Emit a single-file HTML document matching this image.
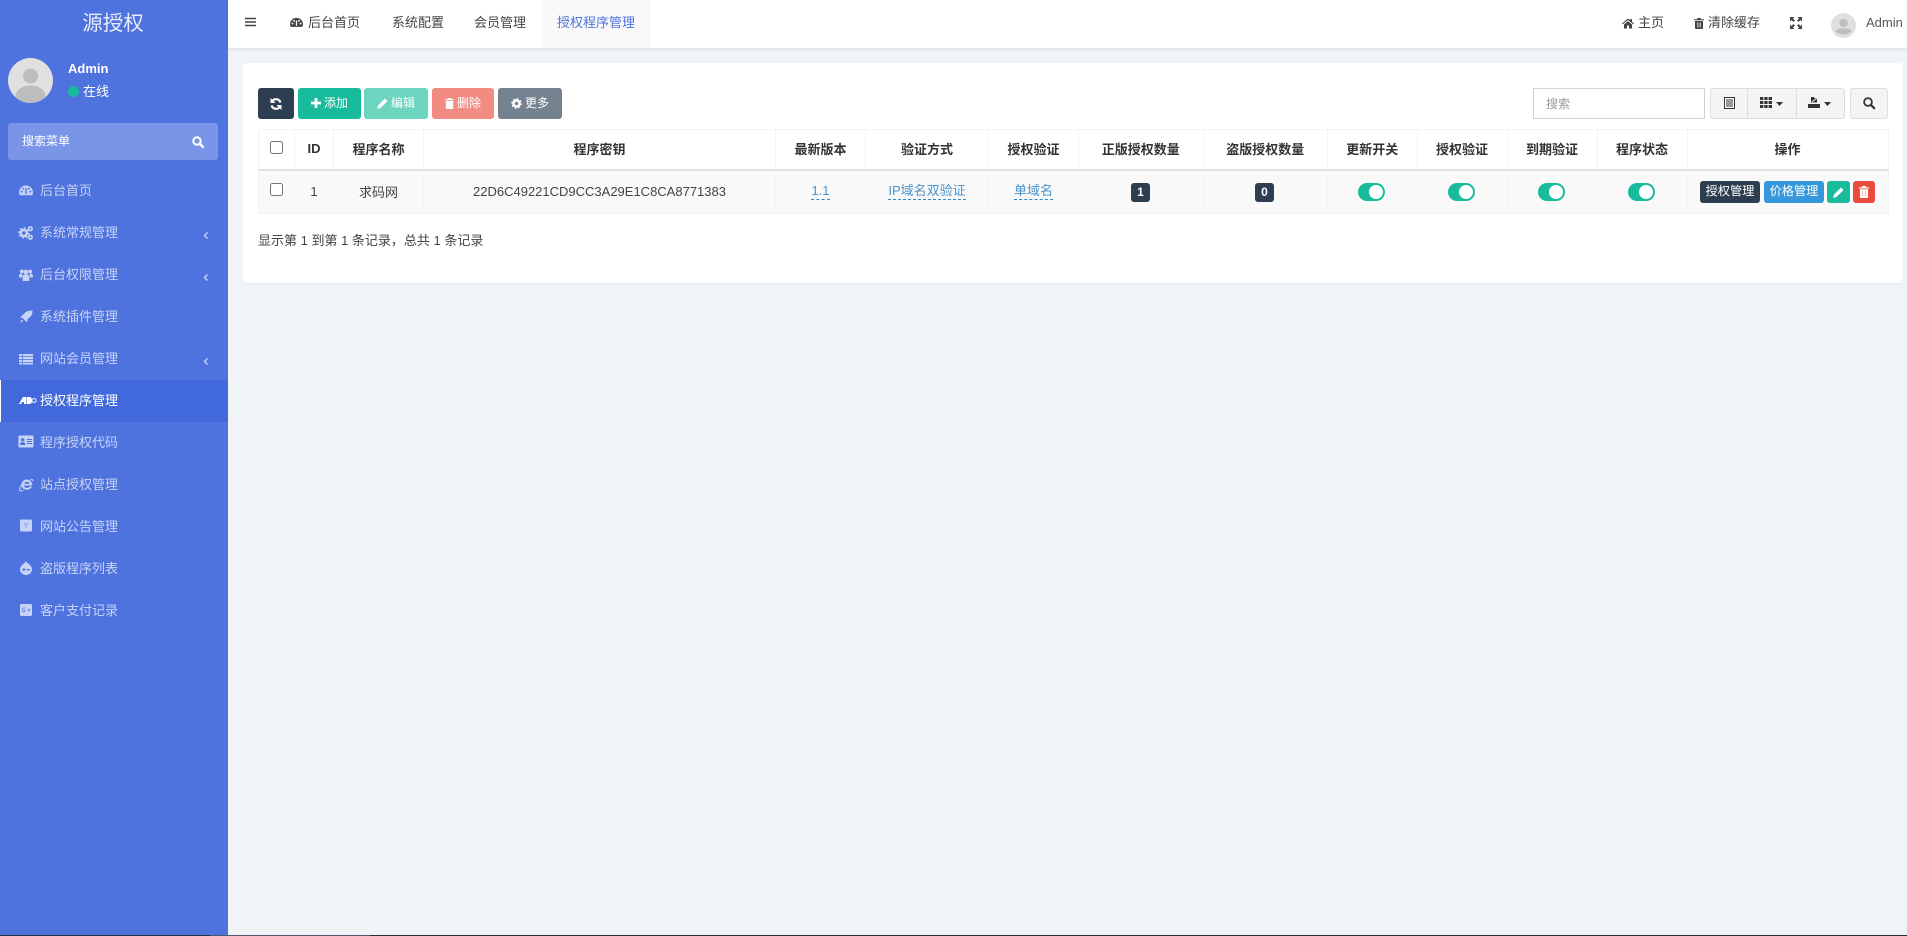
<!DOCTYPE html>
<html lang="zh-CN">
<head>
<meta charset="utf-8">
<title>源授权</title>
<style>
*{box-sizing:border-box}
html,body{margin:0;padding:0;width:1907px;height:936px;overflow:hidden;background:#f0f4f7;font-family:"Liberation Sans","Noto Sans CJK SC",sans-serif;font-size:13px;color:#333}
.a{position:absolute;white-space:nowrap}
svg{display:block;position:absolute;overflow:visible}
#side{position:absolute;left:0;top:0;width:228px;height:936px;background:#4e73df}
.mi{position:absolute;left:0;width:228px;height:42px;line-height:42px;padding-left:40px;color:#c7d3f6;font-size:13px}
.mi.on{background:#4169dc;color:#fff;border-left:1px solid #fff;padding-left:39px}
.mi svg{left:19px;top:14px}
.mi.on svg{left:18px}
.mi .ar{position:absolute;left:203px;top:19px}
#top{position:absolute;left:228px;top:0;width:1679px;height:48px;background:#fff;box-shadow:0 1px 4px rgba(0,0,0,.1)}
.tn{position:absolute;top:0;height:48px;line-height:46px;color:#444;font-size:13px;white-space:nowrap}
#panel{position:absolute;left:243px;top:63px;width:1660px;height:220px;background:#fff;border-radius:4px;box-shadow:0 1px 1px rgba(0,0,0,.05)}
.btn{position:absolute;top:88px;height:31px;line-height:30px;border-radius:3px;color:#fff;font-size:12px;text-align:center;white-space:nowrap}
.btn svg{top:10px}
table{position:absolute;left:258px;top:129px;width:1630px;border-collapse:collapse;table-layout:fixed}
th,td{border:1px solid #f4f4f4;text-align:center;padding:0 0 1px;font-size:13px;overflow:visible;white-space:nowrap}
th{height:40px;font-weight:bold;color:#333;background:#fff;border-bottom:2px solid #e2e2e2;font-size:13px}
td{height:44px;background:#f9f9f9;color:#444}
td a{color:#4b92cc;border-bottom:1px dashed #2f8ccc;text-decoration:none;display:inline-block;line-height:16px;padding:0;position:relative;top:0}
.bd{position:absolute;top:183px;width:19px;height:19px;background:#2c3e50;color:#fff;border-radius:3px;font-size:12px;font-weight:bold;line-height:18px;text-align:center}
.sw{position:absolute;top:183px;width:27px;height:18px;background:#18bc9c;border-radius:9px}
.sw i{position:absolute;right:2px;top:2px;width:14px;height:14px;border-radius:50%;background:#fff;display:block}
.op{position:absolute;top:181px;height:22px;line-height:21px;border-radius:3px;color:#fff;font-size:12.2px;text-align:center;white-space:nowrap}
.chk{position:absolute;margin:0;width:13px;height:13px;left:270px}
.tg{position:absolute;top:88px;height:31px;background:#f4f4f4;border:1px solid #ddd}
</style>
</head>
<body>
<div id="side">
  <div class="a" style="left:0;width:226px;top:9px;height:30px;line-height:30px;text-align:center;font-size:20.5px;color:#e6ecfb">源授权</div>
  <svg style="left:8px;top:58px" width="45" height="45" viewBox="0 0 45 45"><defs><clipPath id="c1"><circle cx="22.5" cy="22.5" r="22.5"/></clipPath></defs><circle cx="22.5" cy="22.5" r="22.5" fill="#e0e0e0"/><circle cx="22.5" cy="18" r="7.5" fill="#bdbdbd"/><ellipse cx="22.5" cy="38" rx="15" ry="10.5" fill="#bdbdbd" clip-path="url(#c1)"/></svg>
  <div class="a" style="left:68px;top:61px;line-height:16px;font-size:13px;font-weight:bold;color:#fff">Admin</div>
  <div class="a" style="left:68px;top:86px;width:11px;height:11px;border-radius:50%;background:#18bc9c"></div>
  <div class="a" style="left:83px;top:83px;line-height:17px;font-size:13px;color:#fff">在线</div>
  <div class="a" style="left:8px;top:123px;width:210px;height:37px;background:#7a95e8;border-radius:3px"></div>
  <div class="a" style="left:22px;top:132px;line-height:18px;font-size:12px;color:#fff">搜索菜单</div>
  <svg style="left:192px;top:136px" width="12" height="12" viewBox="0 0 12 12"><circle cx="5" cy="5" r="3.7" fill="none" stroke="#fff" stroke-width="2"/><path d="M7.8 7.8L11 11" stroke="#fff" stroke-width="2.4" stroke-linecap="round"/></svg>

  <div class="mi" style="top:170px">后台首页<svg width="14" height="14" viewBox="0 0 14 14"><path fill="#c7d3f6" d="M7 1.500A7 7 0 0 0 0 8.300c0 1.100.2 2 .8 2.900h12.400c.6-.9.8-1.800.8-2.900a7 7 0 0 0-7-6.800z"/><circle cx="2.600" cy="7.600" r="1" fill="#4e73df"/><circle cx="4.400" cy="4.600" r="1" fill="#4e73df"/><circle cx="9.600" cy="4.600" r="1" fill="#4e73df"/><circle cx="11.400" cy="7.600" r="1" fill="#4e73df"/><path d="M7 10V4.400" stroke="#4e73df" stroke-width="1.400"/></svg></div>
  <div class="mi" style="top:212px">系统常规管理<svg width="14" height="14" viewBox="0 0 14 14"><circle cx="4.800" cy="7" r="3.100" fill="#4e73df" stroke="#c7d3f6" stroke-width="2.600"/><circle cx="4.800" cy="7" r="5" fill="none" stroke="#c7d3f6" stroke-width="1.400" stroke-dasharray="1.800 2.100"/><circle cx="11.300" cy="2.800" r="1.800" fill="none" stroke="#c7d3f6" stroke-width="1.700"/><circle cx="11.300" cy="11.200" r="1.800" fill="none" stroke="#c7d3f6" stroke-width="1.700"/></svg><svg class="ar" width="6" height="9" viewBox="0 0 6 9"><path d="M4.500 1.500L1.500 4.500L4.500 7.500" fill="none" stroke="#c7d3f6" stroke-width="1.400"/></svg></div>
  <div class="mi" style="top:254px">后台权限管理<svg width="14" height="14" viewBox="0 0 14 14"><circle cx="2.800" cy="3.400" r="1.900" fill="#c7d3f6"/><circle cx="11.200" cy="3.400" r="1.900" fill="#c7d3f6"/><circle cx="7" cy="4" r="2.400" fill="#c7d3f6"/><path fill="#c7d3f6" d="M0 9c0-2.600.8-3.600 2.400-3.600L3.500 6 3 9.500H.6zM14 9c0-2.600-.8-3.600-2.400-3.600L10.500 6l.5 3.500h2.400zM3.600 13V9.500c0-2 1-3 2-3h2.800c1 0 2 1 2 3V13z"/></svg><svg class="ar" width="6" height="9" viewBox="0 0 6 9"><path d="M4.500 1.500L1.500 4.500L4.500 7.500" fill="none" stroke="#c7d3f6" stroke-width="1.400"/></svg></div>
  <div class="mi" style="top:296px">系统插件管理<svg width="14" height="14" viewBox="0 0 14 14"><path fill="#c7d3f6" d="M13.500 .5c0 4-1.500 6.500-4.700 8.300L8 12.500 6 10.500 3.500 8 1 7.500l3.700-3.500C7 1 10 .5 13.500 .5zM2.700 9.500l1.500 1.500L1 13z"/></svg></div>
  <div class="mi" style="top:338px">网站会员管理<svg width="14" height="14" viewBox="0 0 14 14"><path fill="#c7d3f6" d="M0 2h14v2.300H0zM0 5h14v2.300H0zM0 8h14v2.300H0zM0 11h14v1.500H0z"/><path d="M3.600 2v10.500" stroke="#4e73df" stroke-width=".7"/></svg><svg class="ar" width="6" height="9" viewBox="0 0 6 9"><path d="M4.500 1.500L1.500 4.500L4.500 7.500" fill="none" stroke="#c7d3f6" stroke-width="1.400"/></svg></div>
  <div class="mi on" style="top:380px">授权程序管理<svg style="top:17px" width="17" height="7" viewBox="0 0 17 7"><path fill="#fff" d="M0 7L4 0h3v7H5V5H3L2 7z"/><path fill="#fff" d="M7.500 0h3c2 0 2.500 1.700 2.500 3.500S12.500 7 10.500 7h-3z"/><circle cx="15" cy="3.500" r="2" fill="none" stroke="#fff" stroke-width="1.300" opacity=".75"/></svg></div>
  <div class="mi" style="top:422px">程序授权代码<svg style="left:18px;top:13px" width="16" height="13" viewBox="0 0 16 13"><rect x=".5" y=".5" width="15" height="12" rx="1" fill="#c7d3f6"/><circle cx="4.700" cy="4.800" r="1.700" fill="#4e73df"/><path fill="#4e73df" d="M2 10c0-2 1-3 2.700-3s2.700 1 2.700 3zM9 4h5v1H9zM9 6h5v1H9zM9 8h5v1H9z"/></svg></div>
  <div class="mi" style="top:464px">站点授权管理<svg width="14" height="14" viewBox="0 0 14 14"><path fill="#c7d3f6" d="M7.500 1.500a5.800 5.800 0 0 1 5.800 6H5c.2 2.800 4.300 3.200 5.700 1h2.300c-1.800 4.600-9.800 4.200-10.600-1C2 4.700 4.600 1.500 7.500 1.500zM5 5.800h5.800c-.4-2.600-5.200-2.600-5.800 0z"/><path fill="none" stroke="#c7d3f6" stroke-width="1" d="M11 2.200c2-1.200 3.200-.8 2.600 1M2.600 7C.4 9.800-.2 12.800 1.500 13c1 .1 2.200-.5 3-1"/></svg></div>
  <div class="mi" style="top:506px">网站公告管理<svg style="left:20px;top:13px" width="12" height="13" viewBox="0 0 12 13"><rect width="12" height="12" y=".5" rx="1.500" fill="#c7d3f6"/><path d="M4 4l2 2.500L8 4M6 6.500V9" fill="none" stroke="#8aa3ea" stroke-width="1"/></svg></div>
  <div class="mi" style="top:548px">盗版程序列表<svg style="left:20px;top:13px" width="12" height="14" viewBox="0 0 12 14"><path fill="#c7d3f6" d="M6 0c.5 2.200 6 4 6 8.200A6 5.800 0 0 1 0 8.200C0 4 5.500 2.200 6 0z"/><path fill="#4e73df" d="M2 8.500c2-1.800 3-.6 4 0s2.500-1.800 4 0c-.4 1.200-2 1.400-2.800.8-.7-.5-1.700-.5-2.400 0-.8.600-2.400.4-2.800-.8z"/></svg></div>
  <div class="mi" style="top:590px">客户支付记录<svg style="left:20px;top:14px" width="12" height="12" viewBox="0 0 12 12"><rect width="12" height="12" rx="1.500" fill="#c7d3f6"/><path d="M5 4.300C4.400 3.600 2.300 3.600 2.300 6S5 8.400 5 6.300H3.600M7.500 6h3M9 4.500v3" fill="none" stroke="#6f8de6" stroke-width="1"/></svg></div>
</div>

<div id="top"></div>
<svg style="left:245px;top:17px" width="11" height="10" viewBox="0 0 11 10"><path d="M0 1.500h11M0 5h11M0 8.500h11" stroke="#444" stroke-width="1.600"/></svg>
<svg style="left:290px;top:17px" width="13" height="12" viewBox="0 0 14 12"><path fill="#444" d="M7 .5A7 7 0 0 0 0 7.300c0 1.100.2 2 .8 2.900h12.400c.6-.9.8-1.800.8-2.900A7 7 0 0 0 7 .5z"/><circle cx="2.600" cy="6.600" r="1" fill="#fff"/><circle cx="4.400" cy="3.600" r="1" fill="#fff"/><circle cx="9.600" cy="3.600" r="1" fill="#fff"/><circle cx="11.400" cy="6.600" r="1" fill="#fff"/><path d="M7 9V3.400" stroke="#fff" stroke-width="1.400"/></svg>
<div class="tn" style="left:308px">后台首页</div>
<div class="tn" style="left:392px">系统配置</div>
<div class="tn" style="left:474px">会员管理</div>
<div class="a" style="left:542px;top:0;width:109px;height:48px;background:#f9f9f9"></div>
<div class="tn" style="left:557px;color:#4e73df">授权程序管理</div>

<svg style="left:1622px;top:18px" width="12" height="11" viewBox="0 0 12 11"><path fill="#444" d="M6 .5L0 5.500l.7.800L6 2l5.300 4.300.7-.8-2-1.700V1H8.500v1.300zM2 6.500V10.500h3V7.500h2v3h3v-4L6 3.200z"/></svg>
<div class="tn" style="left:1638px">主页</div>
<svg style="left:1694px;top:18px" width="10" height="11" viewBox="0 0 10 11"><path fill="#444" d="M3.500 0h3l.6 1.300H10v1H0v-1h2.900zM1 3h8v7c0 .6-.4 1-1 1H2c-.6 0-1-.4-1-1z"/><path d="M3.300 4.500v5M5 4.500v5M6.700 4.500v5" stroke="#fff" stroke-width=".6"/></svg>
<div class="tn" style="left:1708px">清除缓存</div>
<svg style="left:1790px;top:17px" width="12" height="12" viewBox="0 0 12 12"><path fill="#444" d="M0 0h4.500L3 1.500 5 3.500 3.500 5l-2-2L0 4.500zM12 0v4.500L10.500 3l-2 2L7 3.500l2-2L7.500 0zM0 12V7.500L1.500 9l2-2L5 8.500l-2 2L4.500 12zM12 12H7.500L9 10.500l-2-2L8.500 7l2 2L12 7.500z"/></svg>
<svg style="left:1831px;top:13px" width="25" height="25" viewBox="0 0 45 45"><circle cx="22.500" cy="22.500" r="22.500" fill="#e0e0e0"/><circle cx="22.500" cy="18" r="7.500" fill="#bdbdbd"/><path fill="#bdbdbd" d="M7.700 33c2-4 8-5.500 14.800-5.500S35.300 29 37.300 33a22.500 22.500 0 0 1-29.600 0z"/></svg>
<div class="tn" style="left:1866px;color:#555">Admin</div>

<div id="panel"></div>

<div class="btn" style="left:258px;width:36px;background:#2c3e50"><svg style="left:12px" width="12" height="12" viewBox="0 0 12 12"><path d="M10.500 4.500A4.800 4.800 0 0 0 2 3.300M1.500 7.500A4.800 4.800 0 0 0 10 8.700" fill="none" stroke="#fff" stroke-width="2.200"/><path fill="#fff" d="M.5 0v5h5zM11.500 12V7h-5z"/></svg></div>
<div class="btn" style="left:298px;width:63px;background:#18bc9c;text-align:left;padding-left:26px"><svg style="left:13px" width="10" height="10" viewBox="0 0 10 10"><path d="M5 0v10M0 5h10" stroke="#fff" stroke-width="2.800"/></svg>添加</div>
<div class="btn" style="left:364px;width:64px;background:#6dd5bf;text-align:left;padding-left:27px"><svg style="left:13px" width="11" height="11" viewBox="0 0 11 11"><path fill="#fff" d="M8 .5l2.500 2.500-7 7L0 11l1-3.500z"/></svg>编辑</div>
<div class="btn" style="left:432px;width:62px;background:#f28b82;text-align:left;padding-left:25px"><svg style="left:13px" width="9" height="11" viewBox="0 0 9 11"><path fill="#fff" d="M3 0h3l.5 1.300H9v1H0v-1h2.500zM.8 3h7.400v7c0 .6-.4 1-1 1H1.800c-.6 0-1-.4-1-1z"/></svg>删除</div>
<div class="btn" style="left:498px;width:64px;background:#74818f;text-align:left;padding-left:27px"><svg style="left:13px" width="11" height="11" viewBox="0 0 11 11"><circle cx="5.500" cy="5.500" r="3" fill="none" stroke="#fff" stroke-width="2.400"/><circle cx="5.500" cy="5.500" r="4.700" fill="none" stroke="#fff" stroke-width="1.300" stroke-dasharray="1.800 1.900"/></svg>更多</div>

<div class="a" style="left:1533px;top:88px;width:172px;height:31px;background:#fff;border:1px solid #ccd3dd"></div>
<div class="a" style="left:1546px;top:95px;line-height:18px;font-size:12px;color:#999">搜索</div>
<div class="tg" style="left:1710px;width:38px;border-radius:3px 0 0 3px"></div>
<div class="tg" style="left:1747px;width:50px"></div>
<div class="tg" style="left:1796px;width:49px;border-radius:0 3px 3px 0"></div>
<div class="tg" style="left:1850px;width:38px;border-radius:3px"></div>
<svg style="left:1724px;top:97px" width="11" height="12" viewBox="0 0 11 12"><rect x=".5" y=".5" width="10" height="11" fill="#fff" stroke="#333"/><path d="M2 3h7M2 5h7M2 7h7M2 9h7" stroke="#333"/></svg>
<svg style="left:1760px;top:97px" width="12" height="11" viewBox="0 0 12 11"><path fill="#333" d="M0 0h3.300v3H0zM4.300 0h3.300v3H4.300zM8.600 0H12v3H8.600zM0 4h3.300v3H0zM4.300 4h3.300v3H4.300zM8.600 4H12v3H8.600zM0 8h3.300v3H0zM4.300 8h3.300v3H4.300zM8.600 8H12v3H8.600z"/></svg>
<svg style="left:1776px;top:102px" width="7" height="4" viewBox="0 0 7 4"><path fill="#333" d="M0 0h7L3.500 4z"/></svg>
<svg style="left:1808px;top:96px" width="12" height="12" viewBox="0 0 12 12"><path fill="#333" d="M0 8h12v4H0z"/><path fill="#333" d="M3 1h6v5.500H3z"/><path d="M4 6l5-4M6 1.500h3.500V5" fill="none" stroke="#f4f4f4" stroke-width="1"/></svg>
<svg style="left:1824px;top:102px" width="7" height="4" viewBox="0 0 7 4"><path fill="#333" d="M0 0h7L3.500 4z"/></svg>
<svg style="left:1863px;top:97px" width="12" height="12" viewBox="0 0 12 12"><circle cx="5" cy="5" r="3.900" fill="none" stroke="#333" stroke-width="1.800"/><path d="M8 8l3.200 3.200" stroke="#333" stroke-width="2.200" stroke-linecap="round"/></svg>

<table>
<colgroup><col style="width:36px"><col style="width:39px"><col style="width:90px"><col style="width:352px"><col style="width:90px"><col style="width:123px"><col style="width:90px"><col style="width:124.500px"><col style="width:124.500px"><col style="width:89.500px"><col style="width:90px"><col style="width:90px"><col style="width:90px"><col style="width:201px"></colgroup>
<tr><th></th><th>ID</th><th>程序名称</th><th>程序密钥</th><th>最新版本</th><th>验证方式</th><th>授权验证</th><th>正版授权数量</th><th>盗版授权数量</th><th>更新开关</th><th>授权验证</th><th>到期验证</th><th>程序状态</th><th>操作</th></tr>
<tr><td></td><td>1</td><td>求码网</td><td>22D6C49221CD9CC3A29E1C8CA8771383</td><td><a>1.1</a></td><td><a>IP域名双验证</a></td><td><a>单域名</a></td><td></td><td></td><td></td><td></td><td></td><td></td><td></td></tr>
</table>
<input type="checkbox" class="chk" style="top:141px">
<input type="checkbox" class="chk" style="top:183px">
<div class="bd" style="left:1131px">1</div>
<div class="bd" style="left:1255px">0</div>
<div class="sw" style="left:1358px"><i></i></div>
<div class="sw" style="left:1448px"><i></i></div>
<div class="sw" style="left:1538px"><i></i></div>
<div class="sw" style="left:1628px"><i></i></div>
<div class="op" style="left:1700px;width:60px;background:#2c3e50">授权管理</div>
<div class="op" style="left:1764px;width:60px;background:#3498db">价格管理</div>
<div class="op" style="left:1827px;width:23px;background:#18bc9c"><svg style="left:6px;top:6px" width="11" height="11" viewBox="0 0 11 11"><path fill="#fff" d="M8 .5l2.500 2.500-7 7L0 11l1-3.500z"/></svg></div>
<div class="op" style="left:1853px;width:22px;background:#e74c3c"><svg style="left:6px;top:5px" width="10" height="12" viewBox="0 0 10 12"><path fill="#fff" d="M3.300 0h3.400l.6 1.400H10v1.100H0V1.400h2.700zM1 3.300h8V11c0 .6-.4 1-1 1H2c-.6 0-1-.4-1-1z"/><path d="M3.500 5v5M6.500 5v5" stroke="#f7a9a0" stroke-width=".8"/></svg></div>
<div class="a" style="left:258px;top:232px;line-height:18px;font-size:13px;color:#444">显示第 1 到第 1 条记录，总共 1 条记录</div>
<div class="a" style="left:0;top:935px;width:1907px;height:1px;background:#22303c"></div>
<div class="a" style="left:210px;top:935px;width:160px;height:1px;background:#4a5a6a"></div>
</body>
</html>
